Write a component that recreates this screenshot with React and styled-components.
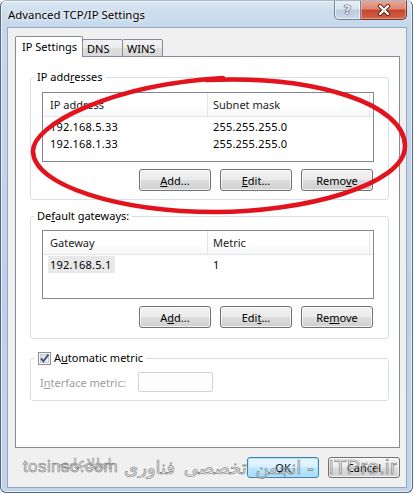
import React from 'react';
import styled, { createGlobalStyle, css } from 'styled-components';

const FONT = `"Noto Sans", "Open Sans", sans-serif`;

const GlobalStyle = createGlobalStyle`
  html, body { margin: 0; padding: 0; background: #ffffff; }
  body { width: 414px; height: 494px; overflow: hidden; font-family: ${FONT}; }
`;

const Window = styled.div`
  position: relative;
  box-sizing: border-box;
  width: 413px;
  height: 493px;
  display: flex;
  flex-direction: column;
  border: 1px solid #56697f;
  border-top-color: #a7b8cb;
  border-radius: 6px;
  background: linear-gradient(to bottom, #dde8f3 0px, #cddeef 10px, #c4d7ec 28px, #bdd2ea 60%, #c0d4ea 100%);
  box-shadow: inset 0 0 0 1px rgba(255, 255, 255, 0.6);
  font-family: ${FONT};
  color: #000;
  overflow: hidden;
`;

const TitleBar = styled.div`
  display: flex;
  align-items: flex-start;
  height: 27px;
  padding-left: 7px;
`;

const TitleText = styled.div`
  flex: 1;
  padding-top: 6px;
  font-size: 11.4px;
  line-height: 16px;
  color: #000;
  text-shadow: 0 0 6px rgba(255, 255, 255, 0.9), 0 0 3px rgba(255, 255, 255, 0.9);
`;

const CaptionButtons = styled.div`
  display: flex;
  margin-top: -1px;
  margin-right: 5px;
`;

const CaptionButton = styled.div`
  box-sizing: border-box;
  display: flex;
  align-items: center;
  justify-content: center;
  height: 20px;
  width: ${(p) => p.$w}px;
  border: 1px solid ${(p) => (p.$close ? '#6b3a31' : '#6f8197')};
  border-top: none;
  ${(p) =>
    p.$close
      ? css`
          border-radius: 0 0 5px 0;
          border-left: none;
          background: linear-gradient(to bottom, #e9a99a 0%, #dc8a74 45%, #c8452c 55%, #d0654d 100%);
          box-shadow: inset 0 0 0 1px rgba(255, 200, 190, 0.5);
        `
      : css`
          border-radius: 0 0 0 5px;
          background: linear-gradient(to bottom, #e9eff6 0%, #d9e3ee 45%, #bccbdc 55%, #cbd8e6 100%);
          box-shadow: inset 0 0 0 1px rgba(255, 255, 255, 0.6);
        `}
`;

const HelpGlyph = styled.span`
  font-family: "DejaVu Sans", sans-serif;
  font-weight: bold;
  font-size: 13px;
  line-height: 13px;
  color: #eef2f6;
  text-shadow: 0 0 1px #2c3c50, 0 0 1px #2c3c50, 0 0 1px #2c3c50;
`;

const Client = styled.div`
  flex: 1;
  display: flex;
  flex-direction: column;
  margin: 0 5px 4px 6px;
  padding: 8px 6px 9px 7px;
  border: 1px solid #95a8bf;
  background: #f0f0f0;
`;

const TabStrip = styled.div`
  display: flex;
  align-items: flex-end;
  height: 21px;
  margin-bottom: -1px;
  position: relative;
  z-index: 1;
`;

const Tab = styled.div`
  box-sizing: border-box;
  display: flex;
  align-items: center;
  font-size: 11px;
  border: 1px solid #898c95;
  border-radius: 2px 2px 0 0;
  ${(p) =>
    p.$active
      ? css`
          width: 68px;
          height: 21px;
          padding: 0 0 2px 6px;
          background: #ffffff;
          border-bottom: none;
        `
      : css`
          width: ${p.$w}px;
          height: 18px;
          margin-left: -1px;
          padding: 1px 0 0 4px;
          background: linear-gradient(to bottom, #f3f3f3 0%, #ebebeb 50%, #dedede 51%, #d8d8d8 100%);
        `}
`;

const TabPage = styled.div`
  box-sizing: border-box;
  height: 392px;
  display: flex;
  flex-direction: column;
  gap: 8px;
  padding: 12px 10px 0 14px;
  background: #ffffff;
  border: 1px solid #898c95;
`;

const Group = styled.fieldset`
  margin: ${(p) => p.$mt || 0}px 0 0 0;
  min-width: 0;
  padding: ${(p) => p.$pt}px 14px ${(p) => p.$pb}px 11px;
  border: 1px solid #d5dfe5;
  border-radius: 3px;
`;

const Legend = styled.legend`
  padding: 0 3px 0 ${(p) => p.$pl || 3}px;
  margin-left: -8px;
  font-size: 11px;
  line-height: 16px;
`;

const LegendInner = styled.span`
  display: flex;
  align-items: center;
  gap: 3px;
`;

const U = styled.span`
  text-decoration: underline;
  text-underline-offset: 1px;
`;

const ListView = styled.div`
  box-sizing: border-box;
  height: ${(p) => p.$h}px;
  border: 1px solid #828790;
  background: #ffffff;
`;

const HeaderRow = styled.div`
  display: flex;
  height: 23px;
  border-bottom: 1px solid #e5e5e5;
  background: linear-gradient(to bottom, #ffffff 0%, #ffffff 55%, #f6f7f9 100%);
`;

const HeaderCell = styled.div`
  box-sizing: border-box;
  display: flex;
  align-items: center;
  width: ${(p) => p.$w}px;
  padding-left: ${(p) => p.$pad}px;
  border-right: 1px solid #e3e5e8;
  font-size: 11px;
  color: #1b1b1b;
`;

const Rows = styled.div`
  padding-top: 1px;
`;

const Row = styled.div`
  display: flex;
  height: 17px;
  align-items: center;
`;

const Cell = styled.div`
  box-sizing: border-box;
  width: ${(p) => p.$w}px;
  padding-left: ${(p) => p.$pad}px;
  font-size: 11px;
  letter-spacing: 0.2px;
`;

const Selected = styled.span`
  display: inline-block;
  margin-left: -2px;
  padding: 0 4px 0 2px;
  line-height: 17px;
  background: #e8e8e8;
`;

const ButtonRow = styled.div`
  display: flex;
  justify-content: flex-end;
  gap: 9px;
  margin-top: 7px;
  padding-right: 1px;
`;

const Button = styled.div`
  box-sizing: border-box;
  display: flex;
  align-items: center;
  justify-content: center;
  width: 72px;
  height: ${(p) => p.$h || 22}px;
  border: 1px solid #707070;
  border-radius: 3px;
  background: linear-gradient(to bottom, #f2f2f2 0%, #ebebeb 48%, #dddddd 52%, #cfcfcf 100%);
  box-shadow: inset 0 0 0 1px rgba(255, 255, 255, 0.75);
  font-size: 11px;
  color: #000;
  ${(p) =>
    p.$default &&
    css`
      border-color: #3c7fb1;
      background: linear-gradient(to bottom, #eaf6fd 0%, #d9f0fc 48%, #bee6fd 52%, #a7d9f5 100%);
      box-shadow: inset 0 0 0 1px #b4e6fb;
    `}
`;

const MetricRow = styled.div`
  display: flex;
  align-items: center;
  margin-left: -2px;
  font-size: 11px;
  color: #9c9c9c;
`;

const MetricLabel = styled.span`
  width: 98px;
`;

const MetricInput = styled.div`
  box-sizing: border-box;
  width: 75px;
  height: 20px;
  border: 1px solid #d2d2d2;
  border-radius: 2px;
  background: #fdfdfd;
`;

const BottomButtons = styled.div`
  display: flex;
  justify-content: flex-end;
  gap: 9px;
  margin-top: 9px;
`;

const Overlay = styled.svg`
  position: absolute;
  left: 0;
  top: 0;
  pointer-events: none;
`;

const Watermark = styled.div`
  position: absolute;
  left: 22px;
  right: 15px;
  top: 451px;
  height: 30px;
  display: flex;
  align-items: center;
  pointer-events: none;
  color: rgba(236, 236, 236, 0.5);
  -webkit-text-stroke: 0.7px rgba(100, 100, 100, 0.75);
`;

const MarkLatin = styled.span`
  flex-shrink: 0;
  font-family: "Liberation Sans", sans-serif;
  font-size: ${(p) => p.$size}px;
  letter-spacing: 0.4px;
  margin-left: ${(p) => (p.$auto ? 'auto' : '0')};
`;

const MarkPersian = styled.span`
  flex-shrink: 0;
  direction: rtl;
  font-family: "DejaVu Sans", sans-serif;
  font-size: ${(p) => p.$size}px;
  margin-left: ${(p) => p.$ml}px;
  word-spacing: 3px;
  white-space: nowrap;
`;

const MarkBehind = styled.span`
  position: absolute;
  left: 36px;
  top: 3px;
  direction: rtl;
  font-family: "DejaVu Sans", sans-serif;
  font-size: 15px;
  opacity: 0.8;
`;

const Checkbox = () => (
  <svg width="13" height="13" viewBox="0 0 13 13">
    <defs>
      <linearGradient id="cbin" x1="0" y1="0" x2="1" y2="1">
        <stop offset="0" stopColor="#d7dbe0" />
        <stop offset="1" stopColor="#fafafa" />
      </linearGradient>
    </defs>
    <rect x="0.5" y="0.5" width="12" height="12" fill="#f6f6f6" stroke="#8e8f8f" />
    <rect x="2.5" y="2.5" width="8" height="8" fill="url(#cbin)" stroke="#c6c9cd" />
    <path d="M3 6.3 L5.4 9.2 L10.4 2.6" fill="none" stroke="#3d5186" strokeWidth="1.9" />
  </svg>
);

const CloseGlyph = () => (
  <svg width="14" height="12" viewBox="0 0 14 12">
    <path d="M3 2 L11 10 M11 2 L3 10" stroke="#5a2219" strokeWidth="4.2" strokeLinecap="round" />
    <path d="M3 2 L11 10 M11 2 L3 10" stroke="#ffffff" strokeWidth="2.4" strokeLinecap="round" />
  </svg>
);

const Ellipse = () => (
  <Overlay width="414" height="494" viewBox="0 0 414 494">
    <path
      d="M205 79 C318 74 404 104 404 145 C404 185 300 211 215 211 C120 211 32 185 32 150 C32 124 108 84 222 77"
      fill="none"
      stroke="#e2131d"
      strokeWidth="4.5"
      strokeLinecap="round"
    />
  </Overlay>
);

export default function App() {
  return (
    <>
      <GlobalStyle />
      <Window>
        <TitleBar>
          <TitleText>Advanced TCP/IP Settings</TitleText>
          <CaptionButtons>
            <CaptionButton $w={27}>
              <HelpGlyph>?</HelpGlyph>
            </CaptionButton>
            <CaptionButton $w={46} $close>
              <CloseGlyph />
            </CaptionButton>
          </CaptionButtons>
        </TitleBar>
        <Client>
          <TabStrip>
            <Tab $active>IP Settings</Tab>
            <Tab $w={41}>DNS</Tab>
            <Tab $w={41}>WINS</Tab>
          </TabStrip>
          <TabPage>
            <Group $pt={7} $pb={8}>
              <Legend>
                IP add<U>r</U>esses
              </Legend>
              <ListView $h={70}>
                <HeaderRow>
                  <HeaderCell $w={165} $pad={7}>IP address</HeaderCell>
                  <HeaderCell $w={162} $pad={5}>Subnet mask</HeaderCell>
                </HeaderRow>
                <Rows>
                  <Row>
                    <Cell $w={165} $pad={7}>192.168.5.33</Cell>
                    <Cell $w={162} $pad={5}>255.255.255.0</Cell>
                  </Row>
                  <Row>
                    <Cell $w={165} $pad={7}>192.168.1.33</Cell>
                    <Cell $w={162} $pad={5}>255.255.255.0</Cell>
                  </Row>
                </Rows>
              </ListView>
              <ButtonRow>
                <Button>
                  <span><U>A</U>dd...</span>
                </Button>
                <Button>
                  <span><U>E</U>dit...</span>
                </Button>
                <Button>
                  <span>Remo<U>v</U>e</span>
                </Button>
              </ButtonRow>
            </Group>
            <Group $pt={6} $pb={10}>
              <Legend>
                De<U>f</U>ault gateways:
              </Legend>
              <ListView $h={69}>
                <HeaderRow>
                  <HeaderCell $w={165} $pad={7}>Gateway</HeaderCell>
                  <HeaderCell $w={162} $pad={5}>Metric</HeaderCell>
                </HeaderRow>
                <Rows>
                  <Row>
                    <Cell $w={165} $pad={7}>
                      <Selected>192.168.5.1</Selected>
                    </Cell>
                    <Cell $w={162} $pad={5}>1</Cell>
                  </Row>
                </Rows>
              </ListView>
              <ButtonRow>
                <Button>
                  <span>A<U>d</U>d...</span>
                </Button>
                <Button>
                  <span>Edi<U>t</U>...</span>
                </Button>
                <Button>
                  <span>Re<U>m</U>ove</span>
                </Button>
              </ButtonRow>
            </Group>
            <Group $pt={6} $pb={8} $mt={3}>
              <Legend $pl={4}>
                <LegendInner>
                  <Checkbox />
                  <span>A<U>u</U>tomatic metric</span>
                </LegendInner>
              </Legend>
              <MetricRow>
                <MetricLabel>I<U>n</U>terface metric:</MetricLabel>
                <MetricInput />
              </MetricRow>
            </Group>
          </TabPage>
          <BottomButtons>
            <Button $default $h={21}>OK</Button>
            <Button $h={21}>Cancel</Button>
          </BottomButtons>
        </Client>
        <Ellipse />
        <Watermark>
          <MarkBehind>اطلاعات</MarkBehind>
          <MarkLatin $size={17}>tosinso.com</MarkLatin>
          <MarkPersian $size={18} $ml={6}>انجمن تخصصی فناوری</MarkPersian>
          <MarkPersian $size={18} $ml={6}>-</MarkPersian>
          <MarkLatin $size={20} $auto>ITPro.ir</MarkLatin>
        </Watermark>
      </Window>
    </>
  );
}
